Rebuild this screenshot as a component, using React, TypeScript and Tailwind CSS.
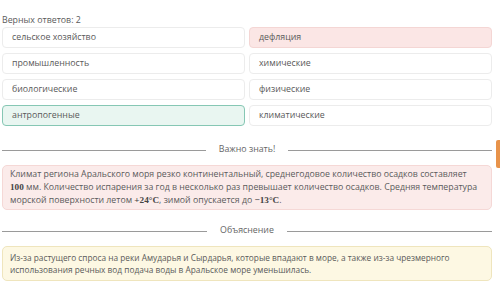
import React from "react";

type Answer = { text: string; state?: "correct" | "wrong" };

const left: Answer[] = [
  { text: "сельское хозяйство" },
  { text: "промышленность" },
  { text: "биологические" },
  { text: "антропогенные", state: "correct" },
];

const right: Answer[] = [
  { text: "дефляция", state: "wrong" },
  { text: "химические" },
  { text: "физические" },
  { text: "климатические" },
];

function AnswerBox({ text, state }: Answer) {
  const tone =
    state === "correct"
      ? "bg-[#e9f6f1] border-[#86c7b4]"
      : state === "wrong"
        ? "bg-[#fbe6e5] border-[#f4d6d4]"
        : "bg-white border-[#ececec]";
  return (
    <div className={`h-[21px] flex items-center px-[9px] rounded-[4px] border ${tone}`}>
      <span className="text-[8.8px] text-[#5a5a5a]">{text}</span>
    </div>
  );
}

function Divider({ label }: { label: string }) {
  return (
    <div className="flex items-center h-[18px]">
      <div className="flex-1 h-px bg-[#9a9a9a]" />
      <span className="px-[13px] text-[8.8px] text-[#666]">{label}</span>
      <div className="flex-1 h-px bg-[#9a9a9a]" />
    </div>
  );
}

const serif = "font-['Liberation_Serif',serif] font-bold text-[9.2px] leading-[12px] text-[#444]";

export default function App() {
  return (
    <div className="relative w-[500px] h-[291px] bg-white overflow-hidden font-['Open_Sans',sans-serif]">
      <div className="pl-[2px] pr-[8px] pt-[13px]">
        <div className="text-[8.8px] text-[#5a5a5a] leading-[14px]">Верных ответов: 2</div>

        <div className="grid grid-cols-2 gap-x-[4px] gap-y-[5px]">
          {left.map((a, i) => (
            <React.Fragment key={i}>
              <AnswerBox {...a} />
              <AnswerBox {...right[i]} />
            </React.Fragment>
          ))}
        </div>

        <div className="mt-[15px]">
          <Divider label="Важно знать!" />
        </div>

        <div className="mt-[6px] bg-[#fbebea] border border-[#f5d8d6] rounded-[5px] px-[7px] py-[2px] text-[8.75px] leading-[13px] text-[#5a5a5a]">
          Климат региона Аральского моря резко континентальный, среднегодовое количество осадков составляет
          <br />
          <span className={serif}>100</span> мм. Количество испарения за год в несколько раз превышает количество осадков. Средняя температура морской поверхности летом{" "}
          <span className={serif}>+24°C</span>, зимой опускается до <span className={serif}>−13°C</span>.
        </div>

        <div className="mt-[12px]">
          <Divider label="Объяснение" />
        </div>

        <div className="mt-[6px] bg-[#fdf8e3] border border-[#efe5bd] rounded-[5px] px-[7px] py-[5px] text-[8.3px] leading-[11.5px] text-[#5a5a5a]">
          Из-за растущего спроса на реки Амударья и Сырдарья, которые впадают в море, а также из-за чрезмерного использования речных вод подача воды в Аральское море уменьшилась.
        </div>
      </div>

      <div className="absolute right-0 top-[140px] w-[4px] h-[28px] bg-[#e8934a] rounded-l-[2px]" />
    </div>
  );
}
